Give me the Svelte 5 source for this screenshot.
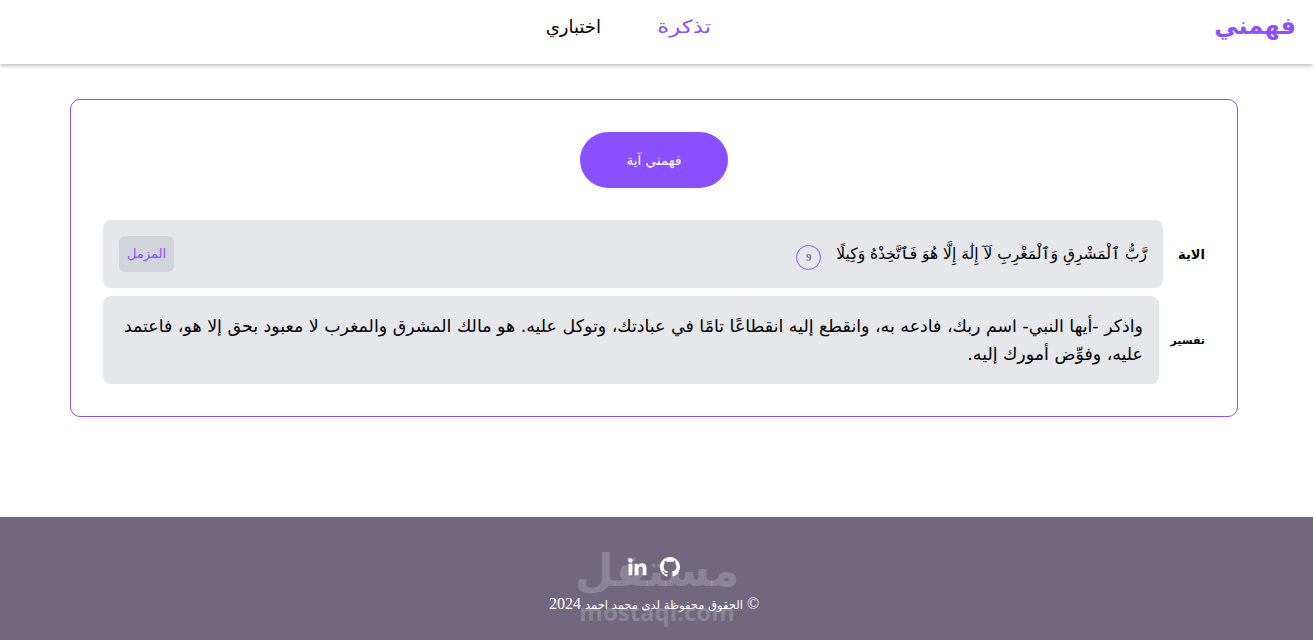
<script lang="ts">
  const ayah = "رَّبُّ ٱلْمَشْرِقِ وَٱلْمَغْرِبِ لَآ إِلَٰهَ إِلَّا هُوَ فَٱتَّخِذْهُ وَكِيلًا";
  const tafsir =
    "واذكر -أيها النبي- اسم ربك، فادعه به، وانقطع إليه انقطاعًا تامًا في عبادتك، وتوكل عليه. هو مالك المشرق والمغرب لا معبود بحق إلا هو، فاعتمد عليه، وفوِّض أمورك إليه.";
</script>

<div class="page" dir="rtl">
  <header class="nav">
    <div class="logo">فهمني</div>
    <nav class="links">
      <a class="active" href="#tadhkira"><span>تذكرة</span></a>
      <a href="#quiz">اختباري</a>
    </nav>
  </header>

  <main class="wrap">
    <section class="card">
      <button class="cta">فهمني آية</button>

      <div class="row">
        <span class="label">الاية</span>
        <div class="box verse">
          <p class="ayah">{ayah}<span class="num">9</span></p>
          <span class="surah">المزمل</span>
        </div>
      </div>

      <div class="row">
        <span class="label wide">تفسير</span>
        <div class="box tafsir">{tafsir}</div>
      </div>
    </section>
  </main>

  <footer class="foot">
    <div class="social">
      <svg class="gh" viewBox="0 0 16 16" width="20" height="20" aria-hidden="true">
        <path fill="#fff" d="M8 0C3.58 0 0 3.58 0 8c0 3.54 2.29 6.53 5.47 7.59.4.07.55-.17.55-.38 0-.19-.01-.82-.01-1.49-2.01.37-2.53-.49-2.69-.94-.09-.23-.48-.94-.82-1.13-.28-.15-.68-.52-.01-.53.63-.01 1.08.58 1.23.82.72 1.21 1.87.87 2.33.66.07-.52.28-.87.51-1.07-1.78-.2-3.64-.89-3.64-3.95 0-.87.31-1.59.82-2.15-.08-.2-.36-1.02.08-2.12 0 0 .67-.21 2.2.82.64-.18 1.32-.27 2-.27s1.36.09 2 .27c1.53-1.04 2.2-.82 2.2-.82.44 1.1.16 1.92.08 2.12.51.56.82 1.27.82 2.15 0 3.07-1.87 3.75-3.65 3.95.29.25.54.73.54 1.48 0 1.07-.01 1.93-.01 2.2 0 .21.15.46.55.38A8.01 8.01 0 0 0 16 8c0-4.42-3.58-8-8-8z" />
      </svg>
      <svg class="in" viewBox="0 0 18 16" width="20" height="18" aria-hidden="true">
        <rect fill="#fff" x="0.5" y="5" width="3.4" height="10.5" />
        <circle fill="#fff" cx="2.2" cy="2.1" r="2" />
        <path fill="#fff" d="M6 5h3.2v1.5C9.8 5.4 11 4.7 12.6 4.7c3 0 4 1.9 4 4.8v6h-3.4V10c0-1.4-.3-2.5-1.7-2.5s-2.1 1-2.1 2.5v5.5H6z" />
      </svg>
    </div>
    <p class="copy"><span>©</span> <span class="ar">الحقوق محفوظة لدى محمد احمد</span> <span>2024</span></p>
    <div class="mark">
      <span class="mark-ar">مستقل</span>
      <span class="mark-en">mostaql.com</span>
    </div>
  </footer>
</div>

<style>
  :global(body) {
    margin: 0;
    background: #fff;
  }
  .page {
    width: 1313px;
    height: 640px;
    display: flex;
    flex-direction: column;
    font-family: "DejaVu Sans", sans-serif;
    color: #000;
    overflow: hidden;
  }
  .nav {
    height: 64px;
    box-sizing: border-box;
    flex: none;
    display: flex;
    align-items: center;
    padding: 0 17px 12px;
    box-shadow: 0 2px 4px rgba(0, 0, 0, 0.25);
  }
  .logo {
    font-size: 24px;
    font-weight: 700;
    color: #8a4fff;
    width: 81px;
    flex: none;
  }
  .links {
    margin-right: 503px;
    display: flex;
    gap: 56px;
    font-size: 18px;
  }
  .links a {
    color: #000;
    text-decoration: none;
  }
  .links a.active {
    color: #8a4fff;
    width: 55px;
    text-align: center;
  }
  /* the original font stretches this word */
  .links a.active span {
    display: inline-block;
    transform: scaleX(1.27);
  }
  .wrap {
    flex: 1;
    padding: 35px 75px 0 70px;
  }
  .card {
    height: 318px;
    box-sizing: border-box;
    border: 1px solid #8a4fff;
    border-radius: 10px;
    padding: 32px;
    display: flex;
    flex-direction: column;
    gap: 8px;
  }
  .cta {
    align-self: center;
    width: 148px;
    height: 56px;
    margin-bottom: 24px;
    border: none;
    border-radius: 28px;
    background: #8a4fff;
    color: #fff;
    font-family: "DejaVu Sans", sans-serif;
    font-size: 13.5px;
  }
  .row {
    display: flex;
    align-items: center;
    gap: 12px;
  }
  .label {
    font-size: 13px;
    font-weight: 700;
    width: 30px;
    flex: none;
  }
  .label.wide {
    width: 34px;
    font-size: 11px;
    white-space: nowrap;
  }
  .box {
    flex: 1;
    background: #e5e7eb;
    border-radius: 8px;
  }
  .verse {
    height: 68px;
    box-sizing: border-box;
    padding: 0 16px;
    display: flex;
    align-items: center;
    justify-content: space-between;
  }
  .ayah {
    margin: 0;
    font-size: 15.5px;
    display: flex;
    align-items: center;
    gap: 15px;
  }
  .num {
    width: 25px;
    height: 25px;
    margin-top: 6px;
    box-sizing: border-box;
    border: 1px solid #8a4fff;
    border-radius: 50%;
    display: flex;
    align-items: center;
    justify-content: center;
    font-family: "Liberation Serif", serif;
    font-weight: 700;
    font-size: 11px;
    color: #7d6f95;
  }
  .surah {
    background: #d1d5db;
    border-radius: 6px;
    color: #8a4fff;
    font-size: 13px;
    line-height: 36px;
    height: 36px;
    width: 55px;
    text-align: center;
  }
  .tafsir {
    height: 88px;
    box-sizing: border-box;
    padding: 16px 16px 16px 12px;
    font-size: 17.4px;
    line-height: 28px;
  }
  .foot {
    height: 123px;
    flex: none;
    box-sizing: border-box;
    padding-right: 5px;
    background: #71687f;
    position: relative;
    display: flex;
    flex-direction: column;
    align-items: center;
    color: #fff;
    overflow: hidden;
  }
  .social {
    margin-top: 40px;
    display: flex;
    align-items: center;
    gap: 12px;
    height: 20px;
    position: relative;
    z-index: 1;
  }
  .copy {
    margin: 17px 0 0;
    font-family: "Liberation Serif", serif;
    font-size: 16px;
    line-height: 20px;
    position: relative;
    z-index: 1;
  }
  .copy .ar {
    font-family: "DejaVu Sans", sans-serif;
    font-size: 11.5px;
  }
  .mark {
    position: absolute;
    left: 560px;
    top: 31px;
    width: 194px;
    display: flex;
    flex-direction: column;
    align-items: center;
    color: rgba(255, 255, 255, 0.2);
    font-weight: 700;
    line-height: 1;
  }
  .mark-ar {
    font-size: 45px;
  }
  .mark-en {
    font-size: 24px;
    font-family: "Open Sans", sans-serif;
    direction: ltr;
    margin-top: 7px;
  }
</style>
